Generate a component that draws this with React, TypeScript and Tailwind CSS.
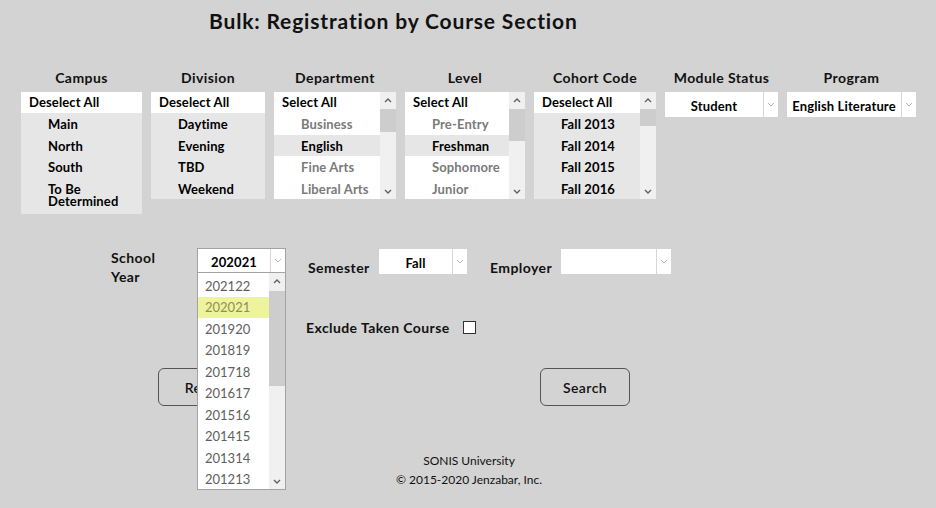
import React from "react";

const font = { fontFamily: "Lato, 'Open Sans', sans-serif" };

type Item = { label: string; on?: boolean; tall?: boolean };

function ScrollBar({ thumbTop, thumbH }: { thumbTop: number; thumbH: number }) {
  return (
    <div className="relative w-[16px] shrink-0 bg-[#f0f0f0]">
      <svg className="absolute left-[4px] top-[5px]" width="8" height="6" viewBox="0 0 8 6">
        <path d="M1 5 L4 2 L7 5" fill="none" stroke="#606060" strokeWidth="1.4" />
      </svg>
      <div className="absolute left-0 right-0 bg-[#cdcdcd]" style={{ top: thumbTop, height: thumbH }} />
      <svg className="absolute left-[4px] bottom-[4px]" width="8" height="6" viewBox="0 0 8 6">
        <path d="M1 1 L4 4 L7 1" fill="none" stroke="#606060" strokeWidth="1.4" />
      </svg>
    </div>
  );
}

function ListBox({
  width,
  head,
  items,
  scroll,
}: {
  width: number;
  head: string;
  items: Item[];
  scroll?: { top: number; h: number };
}) {
  return (
    <div className="flex bg-white" style={{ width, height: scroll ? 107 : undefined }}>
      <div className="flex-1 overflow-hidden">
        <div className="h-[21px] pl-[8px] pt-[1px] flex items-center bg-white text-[13px] tracking-[0.01em] font-bold text-black">
          {head}
        </div>
        {items.map((it) => (
          <div
            key={it.label}
            className={`pl-[27px] flex items-center text-[13px] tracking-[0.01em] font-bold ${
              it.tall ? "pt-[5px] pb-[6px] leading-[12.5px]" : "h-[21.5px] pt-[1px] leading-[14px]"
            } ${it.on ? "bg-[#e6e6e6] text-black" : "bg-white text-[#7a7a7a]"}`}
          >
            {it.label}
          </div>
        ))}
      </div>
      {scroll && <ScrollBar thumbTop={scroll.top} thumbH={scroll.h} />}
    </div>
  );
}

function Chevron() {
  return (
    <svg width="8" height="5" viewBox="0 0 8 5">
      <path d="M1 1 L4 4 L7 1" fill="none" stroke="#b5b5b5" strokeWidth="1" />
    </svg>
  );
}

function Select({ width, value, bordered }: { width: number; value: string; bordered?: boolean }) {
  return (
    <div className={`flex h-[25px] bg-white ${bordered ? "border border-[#a3a3a3]" : ""}`} style={{ width }}>
      <div className="flex-1 flex items-center justify-center pt-[4px] text-[13px] tracking-[0.01em] font-bold text-black">
        {value}
      </div>
      <div className="w-[15px] border-l border-[#d6d6d6] flex items-center justify-center">
        <Chevron />
      </div>
    </div>
  );
}

const Col = ({ title, width, children }: { title: string; width: number; children: React.ReactNode }) => (
  <div className="flex flex-col items-stretch" style={{ width }}>
    <div className="h-[21px] mb-[4px] flex items-center justify-center text-[14px] tracking-[0.03em] font-bold text-[#111]">
      {title}
    </div>
    {children}
  </div>
);

export default function App() {
  const years = ["202122", "202021", "201920", "201819", "201718", "201617", "201516", "201415", "201314", "201213"];

  return (
    <div className="relative w-[936px] h-[508px] bg-[#d3d3d3] overflow-hidden" style={font}>
      <div className="pt-[8px] pl-[209px] h-[67px]">
        <h1 className="text-[21px] tracking-[0.04em] font-bold text-[#111] leading-[26px]">
          Bulk: Registration by Course Section
        </h1>
      </div>

      <div className="flex items-start gap-[9px] pl-[21px]">
        <Col title="Campus" width={121}>
          <ListBox
            width={121}
            head="Deselect All"
            items={[
              { label: "Main", on: true },
              { label: "North", on: true },
              { label: "South", on: true },
              { label: "To Be Determined", on: true, tall: true },
            ]}
          />
        </Col>
        <Col title="Division" width={114}>
          <ListBox
            width={114}
            head="Deselect All"
            items={[
              { label: "Daytime", on: true },
              { label: "Evening", on: true },
              { label: "TBD", on: true },
              { label: "Weekend", on: true },
            ]}
          />
        </Col>
        <Col title="Department" width={122}>
          <ListBox
            width={122}
            head="Select All"
            scroll={{ top: 17, h: 23 }}
            items={[
              { label: "Business" },
              { label: "English", on: true },
              { label: "Fine Arts" },
              { label: "Liberal Arts" },
            ]}
          />
        </Col>
        <Col title="Level" width={120}>
          <ListBox
            width={120}
            head="Select All"
            scroll={{ top: 17, h: 32 }}
            items={[
              { label: "Pre-Entry" },
              { label: "Freshman", on: true },
              { label: "Sophomore" },
              { label: "Junior" },
            ]}
          />
        </Col>
        <Col title="Cohort Code" width={122}>
          <ListBox
            width={122}
            head="Deselect All"
            scroll={{ top: 17, h: 17 }}
            items={[
              { label: "Fall 2013", on: true },
              { label: "Fall 2014", on: true },
              { label: "Fall 2015", on: true },
              { label: "Fall 2016", on: true },
            ]}
          />
        </Col>
        <Col title="Module Status" width={113}>
          <Select width={113} value="Student" />
        </Col>
        <Col title="Program" width={129}>
          <Select width={129} value="English Literature" />
        </Col>
      </div>

      {/* second block */}
      <div className="absolute left-0 top-[248px] w-full">
        <div className="flex items-start">
          <div className="ml-[111px] w-[86px] text-[14px] tracking-[0.03em] font-bold leading-[19px] text-[#111]">
            School
            <br />
            Year
          </div>
          <div className="relative">
            <Select width={89} value="202021" bordered />
            <div className="absolute left-0 top-[25px] w-[89px] h-[217px] bg-white border border-t-0 border-[#a3a3a3] flex z-10">
              <div className="flex-1">
                {years.map((y, i) => (
                  <div
                    key={y}
                    className={`h-[21.5px] pl-[7px] pt-[1px] flex items-center text-[13px] ${
                      i === 1 ? "bg-[#eef39d] text-[#8f8f55]" : "text-[#5e5e5e]"
                    } ${i === 0 ? "mt-[2px]" : ""}`}
                  >
                    {y}
                  </div>
                ))}
              </div>
              <ScrollBar thumbTop={18} thumbH={95} />
            </div>
          </div>
          <div className="ml-[22px] w-[71px] mt-[10px] text-[14px] tracking-[0.03em] font-bold text-[#111] leading-[19px]">
            Semester
          </div>
          <div className="mt-[1px]">
            <Select width={88} value="Fall" />
          </div>
          <div className="ml-[23px] w-[71px] mt-[10px] text-[14px] tracking-[0.03em] font-bold text-[#111] leading-[19px]">
            Employer
          </div>
          <div className="mt-[1px]">
            <Select width={110} value="" />
          </div>
        </div>

        <div className="flex items-center ml-[306px] mt-[31px]">
          <span className="w-[157px] text-[14px] tracking-[0.03em] font-bold text-[#111]">Exclude Taken Course</span>
          <span className="w-[13px] h-[13px] bg-white border border-[#333]" />
        </div>

        <div className="flex mt-[30px]">
          <button className="ml-[158px] w-[90px] h-[38px] rounded-[6px] border border-[#555] text-[14px] tracking-[0.03em] text-[#111] font-semibold">
            Reset
          </button>
          <button className="ml-[292px] w-[90px] h-[38px] rounded-[6px] border border-[#555] text-[14px] tracking-[0.03em] text-[#111] font-semibold">
            Search
          </button>
        </div>
      </div>

      <div className="absolute left-0 right-0 top-[451px] flex flex-col items-center pl-[2px] text-[12px] leading-[19px] text-[#111]">
        <div>SONIS University</div>
        <div>© 2015-2020 Jenzabar, Inc.</div>
      </div>
    </div>
  );
}
